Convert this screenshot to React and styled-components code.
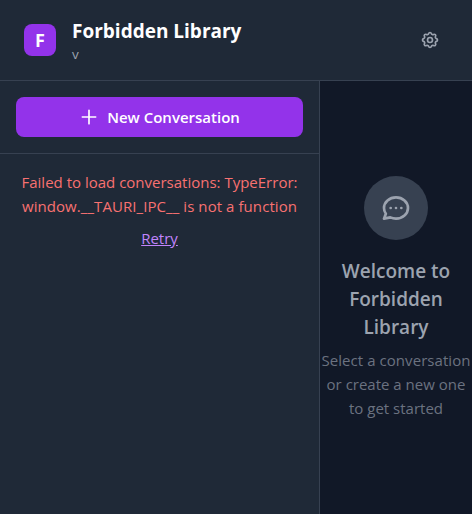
import React from "react";
import styled, { createGlobalStyle } from "styled-components";

const GlobalStyle = createGlobalStyle`
  *, *::before, *::after { box-sizing: border-box; }
  body {
    margin: 0;
    overflow: hidden;
    background: #111827;
    font-family: "Segoe UI", "Open Sans", "Noto Sans", sans-serif;
  }
  h1, h2, p { margin: 0; }
  button { font-family: inherit; border: 0; cursor: pointer; }
`;

const Shell = styled.div`
  display: flex;
  flex-direction: column;
  height: 100vh;
  color: #fff;
`;

const Header = styled.header`
  display: flex;
  align-items: center;
  justify-content: space-between;
  height: 81px;
  padding: 16px 24px;
  background: #1f2937;
  border-bottom: 1px solid #374151;
`;

const Brand = styled.div`
  display: flex;
  align-items: center;
  gap: 16px;
`;

const Logo = styled.div`
  display: flex;
  align-items: center;
  justify-content: center;
  width: 32px;
  height: 32px;
  border-radius: 8px;
  background: #9333ea;
  font-size: 18px;
  font-weight: 700;
  line-height: 28px;
`;

const Title = styled.h1`
  font-size: 19px;
  font-weight: 700;
  line-height: 28px;
  padding-top: 1px;
  height: 28px;
`;

const Version = styled.p`
  height: 20px;
  font-size: 13.5px;
  line-height: 20px;
  color: #9ca3af;
`;

const IconButton = styled.button`
  display: flex;
  padding: 8px;
  border-radius: 8px;
  background: transparent;
  color: #9ca3af;
`;

const Icon = styled.svg.attrs({
  viewBox: "0 0 24 24",
  fill: "none",
  stroke: "currentColor",
  strokeWidth: 2,
  strokeLinecap: "round",
  strokeLinejoin: "round",
})`
  display: block;
  flex: none;
  width: ${(p) => p.$size}px;
  height: ${(p) => p.$size}px;
`;

const Body = styled.div`
  display: flex;
  flex: 1;
  min-height: 0;
`;

const Sidebar = styled.aside`
  flex: none;
  width: 320px;
  background: #1f2937;
  border-right: 1px solid #374151;
`;

const SidebarActions = styled.div`
  padding: 16px;
  border-bottom: 1px solid #374151;
`;

const PrimaryButton = styled.button`
  display: flex;
  align-items: center;
  justify-content: center;
  gap: 8px;
  width: 100%;
  height: 40px;
  border-radius: 8px;
  background: #9333ea;
  color: #fff;
  font-size: 15px;
  font-weight: 600;
  line-height: 24px;
`;

const ErrorState = styled.div`
  display: flex;
  flex-direction: column;
  align-items: center;
  gap: 8px;
  padding: 16px 0;
  font-size: 15px;
  line-height: 24px;
  text-align: center;
`;

const ErrorText = styled.p`
  color: #f87171;
`;

const RetryButton = styled.button`
  padding: 0;
  background: none;
  color: #c084fc;
  font-size: 15px;
  line-height: 24px;
  text-decoration: underline;
`;

const Line = styled.span`
  display: block;
  white-space: nowrap;
  letter-spacing: ${(p) => p.$tracking || 0}px;
`;

const Main = styled.main`
  display: flex;
  flex: 1;
  flex-direction: column;
  align-items: center;
  justify-content: center;
  min-width: 0;
  padding-top: 1px;
  background: #111827;
  text-align: center;
`;

const Bubble = styled.div`
  display: flex;
  align-items: center;
  justify-content: center;
  width: 64px;
  height: 64px;
  margin-bottom: 17px;
  border-radius: 50%;
  background: #374151;
  color: #9ca3af;
`;

const Welcome = styled.h2`
  margin-bottom: 7px;
  color: #9ca3af;
  font-size: 19px;
  font-weight: 600;
  line-height: 28px;
`;

const Hint = styled.p`
  color: #6b7280;
  font-size: 15px;
  line-height: 24px;
`;

export default function App() {
  return (
    <Shell>
      <GlobalStyle />
      <Header>
        <Brand>
          <Logo>F</Logo>
          <div>
            <Title><Line>Forbidden Library</Line></Title>
            <Version>v</Version>
          </div>
        </Brand>
        <IconButton aria-label="Settings">
          <Icon $size={20}>
            <path d="M10.325 4.317c.426-1.756 2.924-1.756 3.35 0a1.724 1.724 0 002.573 1.066c1.543-.94 3.31.826 2.37 2.37a1.724 1.724 0 001.065 2.572c1.756.426 1.756 2.924 0 3.35a1.724 1.724 0 00-1.066 2.573c.94 1.543-.826 3.31-2.37 2.37a1.724 1.724 0 00-2.572 1.065c-.426 1.756-2.924 1.756-3.35 0a1.724 1.724 0 00-2.573-1.066c-1.543.94-3.31-.826-2.37-2.37a1.724 1.724 0 00-1.065-2.572c-1.756-.426-1.756-2.924 0-3.35a1.724 1.724 0 001.066-2.573c-.94-1.543.826-3.31 2.37-2.37.996.608 2.296.07 2.572-1.065z" />
            <path d="M15 12a3 3 0 11-6 0 3 3 0 016 0z" />
          </Icon>
        </IconButton>
      </Header>
      <Body>
        <Sidebar>
          <SidebarActions>
            <PrimaryButton>
              <Icon $size={20}><path d="M12 4v16m8-8H4" /></Icon>
              <Line>New Conversation</Line>
            </PrimaryButton>
          </SidebarActions>
          <ErrorState>
            <ErrorText>
              <Line>Failed to load conversations: TypeError:</Line>
              <Line $tracking={0.07}>window.__TAURI_IPC__ is not a function</Line>
            </ErrorText>
            <RetryButton>Retry</RetryButton>
          </ErrorState>
        </Sidebar>
        <Main>
          <Bubble>
            <Icon $size={32}>
              <path d="M8 12h.01M12 12h.01M16 12h.01M21 12c0 4.418-4.03 8-9 8a9.863 9.863 0 01-4.255-.949L3 20l1.395-3.72C3.512 15.042 3 13.574 3 12c0-4.418 4.03-8 9-8s9 3.582 9 8z" />
            </Icon>
          </Bubble>
          <Welcome>
            <Line>Welcome to</Line>
            <Line>Forbidden</Line>
            <Line>Library</Line>
          </Welcome>
          <Hint>
            <Line $tracking={0.06}>Select a conversation</Line>
            <Line>or create a new one</Line>
            <Line>to get started</Line>
          </Hint>
        </Main>
      </Body>
    </Shell>
  );
}
